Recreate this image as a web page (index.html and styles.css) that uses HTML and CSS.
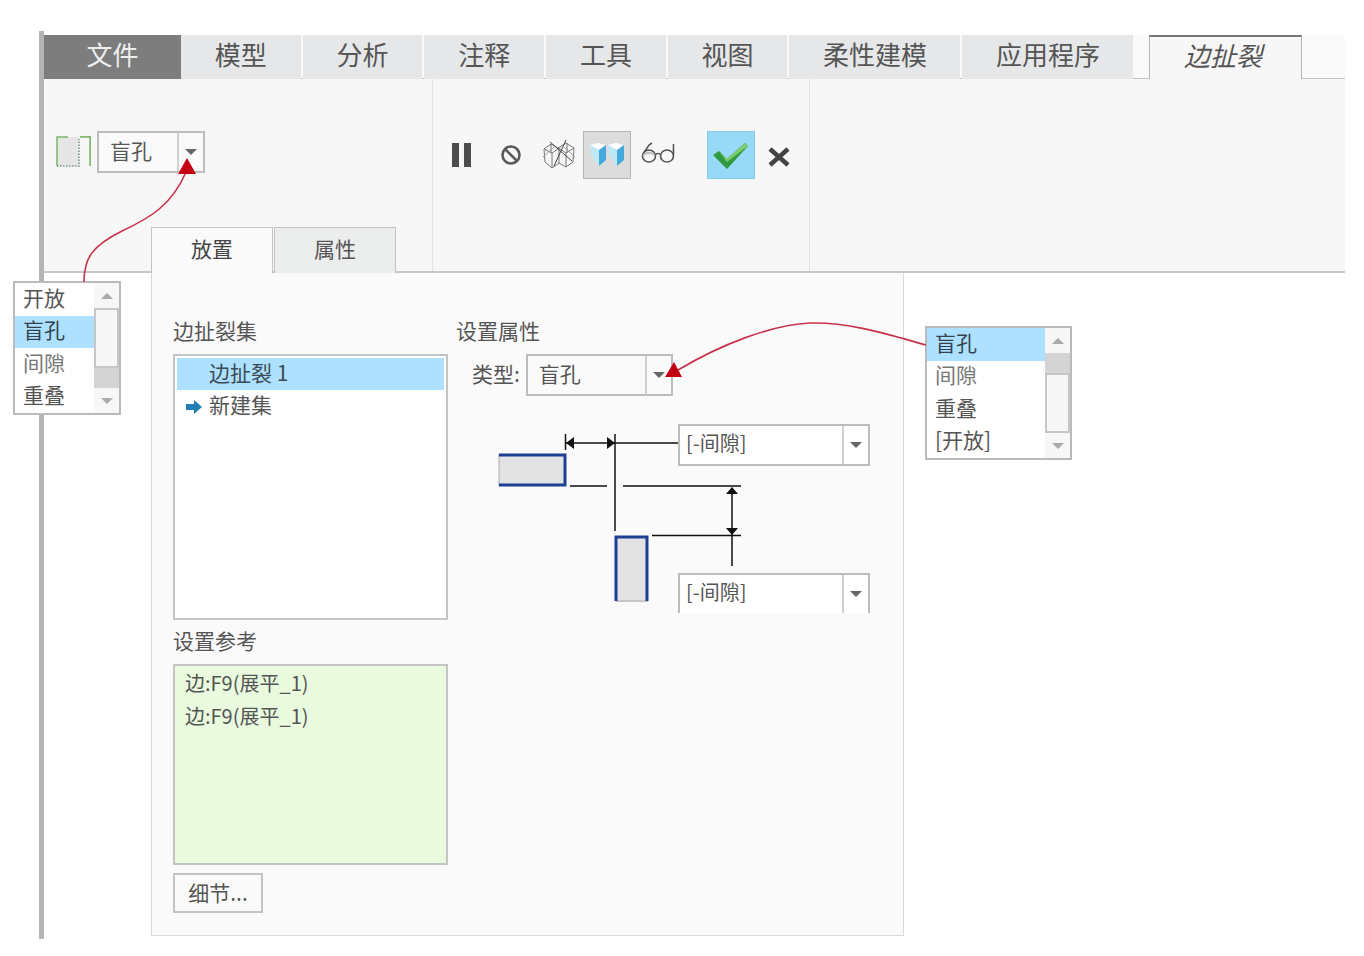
FILE: index.html
```html
<!DOCTYPE html>
<html lang="zh-CN">
<head>
  <meta charset="UTF-8">
  <title>边扯裂</title>
  <link rel="stylesheet" href="styles.css">
</head>
<body>
  <div class="window">
    <nav class="tab-bar">
      <div class="tab tab-file">文件</div>
      <div class="tab tab-sm">模型</div>
      <div class="tab tab-sm">分析</div>
      <div class="tab tab-sm">注释</div>
      <div class="tab tab-sm">工具</div>
      <div class="tab tab-sm">视图</div>
      <div class="tab tab-lg">柔性建模</div>
      <div class="tab tab-lg">应用程序</div>
      <div class="tab tab-active">边扯裂</div>
      <div class="tab-rest"></div>
    </nav>

    <div class="ribbon">
      <div class="group group-type">
        <div class="type-row">
          <svg class="type-icon" width="36" height="34" viewBox="0 0 36 34">
            <rect x="1" y="2" width="22" height="29" fill="#e6e6e6" />
            <path d="M1 31V2H12M24 2H34V31" fill="none" stroke="#7fb56a" stroke-width="1.5" />
            <path d="M1 31H23V4" fill="none" stroke="#6f8f8f" stroke-width="1.5" stroke-dasharray="1.5 1.5" />
            <rect x="24" y="2" width="10" height="29" fill="#f7f7f7" />
            <path d="M24 2H34V31" fill="none" stroke="#7fb56a" stroke-width="1.5" />
          </svg>
          <div class="combo combo-ribbon">
            <div class="combo-value">盲孔</div>
            <div class="combo-btn"><span class="caret"></span></div>
          </div>
        </div>
        <div class="panel-tabs">
          <div class="panel-tab panel-tab-active">放置</div>
          <div class="panel-tab">属性</div>
        </div>
      </div>

      <div class="group group-tools">
        <svg class="tool-pause" width="22" height="26" viewBox="0 0 22 26">
          <rect x="1" y="1" width="7" height="24" fill="#4d4d4d" />
          <rect x="13" y="1" width="7" height="24" fill="#4d4d4d" />
        </svg>
        <svg class="tool-stop" width="22" height="22" viewBox="0 0 22 22">
          <circle cx="11" cy="11" r="8.500" fill="none" stroke="#5a5a5a" stroke-width="2.600" />
          <path d="M5 5L17 17" stroke="#5a5a5a" stroke-width="2.600" />
        </svg>
        <svg class="tool-wire" width="34" height="30" viewBox="0 0 34 30" fill="none" stroke="#777" stroke-width="1">
          <path d="M2 10L9 5L16 9L24 4L32 9L31 23L24 28L17 24L10 29L3 23Z" />
          <path d="M2 10L10 14L17 9L24 14L32 9M10 14V29M24 14V28M17 9V24M9 5V14M25 4V14" />
          <path d="M24 1L12 27M8 3L30 22" stroke="#444" />
          <path d="M1 18L12 8M22 8L33 18" stroke="#999" />
        </svg>
        <div class="tool-btn">
          <svg width="34" height="28" viewBox="0 0 34 28">
            <path d="M0 4L8 2L16 4L9 9Z" fill="#fff" />
            <path d="M0 4L9 9V25L1 14Z" fill="#bfe8f6" />
            <path d="M9 9L16 4V19L9 25Z" fill="#45aadb" />
            <path d="M18 4L26 2L34 4L27 9Z" fill="#fff" />
            <path d="M18 4L27 9V25L19 14Z" fill="#bfe8f6" />
            <path d="M27 9L34 4V19L27 25Z" fill="#45aadb" />
          </svg>
        </div>
        <svg class="tool-glasses" width="34" height="26" viewBox="0 0 34 26" fill="none" stroke="#555" stroke-width="1.600">
          <ellipse cx="8" cy="16" rx="6.500" ry="6" />
          <ellipse cx="26" cy="16" rx="6.500" ry="6" />
          <path d="M14 15C16 13 18 13 20 15M2 14L8 5L11 3M32.500 15V4" />
          <path d="M2.500 15C5 12 11 12 13.500 15" stroke="#bbb" stroke-width="2" />
        </svg>
        <div class="ok-btn">
          <svg width="38" height="30" viewBox="0 0 38 30">
            <path d="M1 15L7 11L15 19L33 3L36 6L15 29Z" fill="#2f9a3f" />
            <path d="M7 11L15 19L33 3L36 6L15 22Z" fill="#7ccb6c" />
          </svg>
        </div>
        <svg class="tool-close" width="22" height="20" viewBox="0 0 22 20">
          <path d="M2 2L20 18M20 2L2 18" stroke="#444" stroke-width="4.500" />
        </svg>
      </div>

      <div class="group group-empty"></div>
    </div>

    <section class="panel">
      <div class="col-left">
        <div class="field-label">边扯裂集</div>
        <div class="list list-sets">
          <div class="list-row list-row-sel">边扯裂 1</div>
          <div class="list-row">
            <svg class="new-arrow" width="18" height="16" viewBox="0 0 18 16">
              <path d="M1 5H9V1L17 8L9 15V11H1Z" fill="#1f7fb4" />
            </svg>
            新建集
          </div>
        </div>
        <div class="field-label label-refs">设置参考</div>
        <div class="list list-refs">
          <div class="ref-row">边:F9(展平_1)</div>
          <div class="ref-row">边:F9(展平_1)</div>
        </div>
        <button class="details-btn">细节...</button>
      </div>

      <div class="col-right">
        <div class="field-label">设置属性</div>
        <div class="prop-row">
          <span class="prop-label">类型:</span>
          <div class="combo combo-prop">
            <div class="combo-value">盲孔</div>
            <div class="combo-btn"><span class="caret"></span></div>
          </div>
        </div>
        <div class="diagram">
          <svg class="diagram-lines" width="385" height="193" viewBox="490 420 385 193">
            <rect x="499" y="454" width="66" height="32" fill="#e3e3e3" />
            <path d="M499 454V486" stroke="#aaa" />
            <path d="M499 455H565V485H499" fill="none" stroke="#1c3f94" stroke-width="3" />
            <rect x="616" y="536" width="32" height="66" fill="#e3e3e3" />
            <path d="M616 601H648" stroke="#aaa" />
            <path d="M616 601V537H647V601" fill="none" stroke="#1c3f94" stroke-width="3" />
            <g stroke="#111" stroke-width="1.500" fill="none">
              <path d="M565.500 434V450M565 443H678M615 434V531" />
              <path d="M570 486H607M623 486H741M652 535.500H741M732 488V566" />
            </g>
            <g fill="#111">
              <path d="M566 443L574 437V449Z" />
              <path d="M615 443L607 437V449Z" />
              <path d="M732 487L726 494H738Z" />
              <path d="M732 535L726 528H738Z" />
            </g>
          </svg>
          <div class="combo combo-gap combo-gap-top">
            <div class="combo-value">[-间隙]</div>
            <div class="combo-btn"><span class="caret"></span></div>
          </div>
          <div class="combo combo-gap combo-gap-bottom">
            <div class="combo-value">[-间隙]</div>
            <div class="combo-btn"><span class="caret"></span></div>
          </div>
        </div>
      </div>
    </section>
  </div>

  <!-- callout dropdowns beside the screenshot -->
  <div class="callout callout-left">
    <div class="callout-items">
      <div class="callout-item">开放</div>
      <div class="callout-item callout-item-sel">盲孔</div>
      <div class="callout-item item-dim">间隙</div>
      <div class="callout-item">重叠</div>
    </div>
    <div class="scroll">
      <div class="scroll-btn"><span class="caret caret-up"></span></div>
      <div class="scroll-thumb"></div>
      <div class="scroll-track"></div>
      <div class="scroll-btn"><span class="caret caret-dim"></span></div>
    </div>
  </div>

  <div class="callout callout-right">
    <div class="callout-items">
      <div class="callout-item callout-item-sel">盲孔</div>
      <div class="callout-item item-dim">间隙</div>
      <div class="callout-item">重叠</div>
      <div class="callout-item">[开放]</div>
    </div>
    <div class="scroll">
      <div class="scroll-btn"><span class="caret caret-up"></span></div>
      <div class="scroll-track"></div>
      <div class="scroll-thumb"></div>
      <div class="scroll-btn"><span class="caret caret-dim"></span></div>
    </div>
  </div>

  <svg class="arrows" width="1364" height="956" viewBox="0 0 1364 956">
    <g fill="none" stroke="#c8324a" stroke-width="1.600">
      <path d="M84 282C84 258 92 246 122 231C150 218 172 205 186 172" />
      <path d="M926 345C890 335 850 322 810 323C770 325 720 345 678 370" />
    </g>
    <path d="M187 158L178 174H196Z" fill="#c40015" />
    <path d="M674 362L665 377H682Z" fill="#c40015" />
  </svg>
</body>
</html>
```

FILE: styles.css
```css
:root {
  --text-color: #555;
  --line-color: #bdbdbd;
  --select-color: #aee0ff;
  --tab-color: #e6e7e8;
  --ribbon-color: #f7f7f7;
}

* {
  box-sizing: border-box;
}

body {
  margin: 0;
  background-color: white;
  color: var(--text-color);
  font-family: "Noto Sans CJK SC", "Noto Sans", sans-serif;
  font-size: 21px;
  position: relative;
  height: 956px;
  overflow: hidden;
}

.window {
  width: 1306px;
  height: 908px;
  margin: 31px 0 0 39px;
  border-left: 5px solid #b4b4b4;
}

/* Top tabs */
.tab-bar {
  display: flex;
  gap: 2px;
  height: 48px;
  padding-top: 4px;
  background: linear-gradient(#fff 0, #fff 4px, #fafafa 4px);
  border-bottom: 1px solid #c4c4c4;
}

.tab {
  display: flex;
  align-items: center;
  justify-content: center;
  height: 44px;
  padding-bottom: 6px;
  background-color: var(--tab-color);
  font-size: 26px;
  line-height: 1;
}

.tab-file {
  width: 137px;
  margin-right: -2px;
  background-color: #7d7d7d;
  color: #eee;
}

.tab-sm {
  width: 119.700px;
}

.tab-lg {
  width: 171px;
}

.tab-active {
  width: 153px;
  margin-left: 14px;
  padding-right: 6px;
  background-color: var(--ribbon-color);
  border: 1px solid #b5b5b5;
  border-top: 2px solid #777;
  border-bottom: none;
  font-style: italic;
  position: relative;
  z-index: 1;
}

.tab-rest {
  flex: 1;
}

/* Ribbon */
.ribbon {
  display: flex;
  height: 194px;
  background-color: var(--ribbon-color);
  border-bottom: 2px solid #c8c8c8;
}

.group {
  border-right: 1px solid #e2e2e2;
}

.group-type {
  display: flex;
  flex-direction: column;
  justify-content: space-between;
  width: 389px;
  padding: 52px 0 0 12px;
}

.type-row {
  display: flex;
  align-items: center;
  gap: 5px;
}

.panel-tabs {
  display: flex;
  gap: 1px;
  height: 46px;
  margin: 0 0 -2px 95px;
}

.panel-tab {
  display: flex;
  align-items: center;
  justify-content: center;
  width: 122px;
  padding-bottom: 5px;
  background-color: #eceded;
  border: 1px solid #c4c4c4;
  border-bottom: none;
}

.panel-tab-active {
  background-color: #fafafa;
  color: #444;
}

.group-tools {
  display: flex;
  align-items: flex-start;
  width: 377px;
  padding: 52px 0 0 18px;
}

.tool-pause {
  margin: 11px 0 0 0;
}

.tool-stop {
  margin: 13px 0 0 27px;
}

.tool-wire {
  margin: 8px 0 0 20px;
}

.tool-btn {
  display: flex;
  align-items: center;
  justify-content: center;
  width: 48px;
  height: 48px;
  margin-left: 7px;
  background-color: #dcdcdc;
  border: 1px solid #b5b5b5;
}

.tool-glasses {
  margin: 9px 0 0 10px;
}

.ok-btn {
  display: flex;
  align-items: center;
  justify-content: center;
  width: 48px;
  height: 48px;
  margin-left: 32px;
  background-color: #99d9f8;
  border: 1px solid #84cdea;
}

.tool-close {
  margin: 16px 0 0 13px;
}

.group-empty {
  flex: 1;
  border-right: none;
}

/* Combo boxes */
.combo {
  display: flex;
  background-color: #fafafa;
  border: 2px solid var(--line-color);
  line-height: 1;
}

.combo-value {
  flex: 1;
  display: flex;
  align-items: center;
  padding: 0 0 4px 11px;
}

.combo-btn {
  display: flex;
  align-items: center;
  justify-content: center;
  width: 26px;
  border-left: 2px solid #cfcfcf;
}

.caret {
  width: 0;
  height: 0;
  border-left: 6px solid transparent;
  border-right: 6px solid transparent;
  border-top: 6px solid #666;
}

.caret-up {
  border-top: none;
  border-bottom: 6px solid #aaa;
}

.caret-dim {
  border-top-color: #aaa;
}

.combo-ribbon {
  width: 108px;
  height: 42px;
}

.combo-prop {
  width: 147px;
  height: 42px;
}

.combo-gap {
  position: absolute;
  left: 188px;
  width: 192px;
  background-color: white;
}

.combo-gap .combo-value {
  padding-left: 6px;
  font-size: 20px;
}

.combo-gap-top {
  top: 4px;
  height: 42px;
}

.combo-gap-bottom {
  top: 153px;
  height: 40px;
  border-bottom: none;
}

/* Placement panel */
.panel {
  display: flex;
  gap: 8px;
  width: 753px;
  height: 663px;
  margin-left: 107px;
  padding: 46px 0 0 21px;
  background-color: #fafafa;
  border: 1px solid #d8d8d8;
  border-top: none;
}

.col-left {
  width: 275px;
}

.field-label {
  height: 26px;
  margin-bottom: 9px;
  line-height: 22px;
}

.list {
  border: 2px solid #c4c4c4;
  padding: 2px;
}

.list-sets {
  height: 266px;
  background-color: white;
}

.list-row {
  display: flex;
  align-items: center;
  height: 32px;
  padding: 0 0 4px 32px;
  position: relative;
}

.list-row-sel {
  background-color: var(--select-color);
  color: #3c4a55;
}

.new-arrow {
  position: absolute;
  left: 8px;
  top: 9px;
}

.label-refs {
  margin: 9px 0 9px;
}

.list-refs {
  height: 201px;
  padding: 2px 10px;
  background-color: #e9fadf;
  font-size: 20px;
}

.ref-row {
  height: 33px;
  line-height: 29px;
}

.details-btn {
  display: block;
  width: 90px;
  height: 40px;
  margin-top: 8px;
  padding: 0 0 3px;
  background-color: #fafafa;
  border: 2px solid #c4c4c4;
  color: var(--text-color);
  font: inherit;
}

.prop-row {
  display: flex;
  align-items: center;
  gap: 6px;
  padding-left: 16px;
}

.prop-label {
  padding-bottom: 4px;
}

.diagram {
  position: relative;
  width: 385px;
  height: 193px;
  margin: 24px 0 0 34px;
}

.diagram-lines {
  display: block;
}

/* Callouts */
.callout {
  position: absolute;
  display: flex;
  background-color: white;
  border: 2px solid #bababa;
}

.callout-left {
  left: 13px;
  top: 281px;
  width: 108px;
  height: 134px;
}

.callout-right {
  left: 925px;
  top: 326px;
  width: 147px;
  height: 134px;
}

.callout-items {
  flex: 1;
}

.callout-item {
  display: flex;
  align-items: center;
  height: 32.500px;
  padding: 0 0 5px 8px;
}

.callout-item-sel {
  background-color: var(--select-color);
  color: #34424e;
}

.item-dim {
  color: #777;
}

.scroll {
  display: flex;
  flex-direction: column;
  width: 25px;
  background-color: #f2f2f2;
}

.scroll-btn {
  display: flex;
  align-items: center;
  justify-content: center;
  flex: none;
  height: 25px;
  background-color: #f7f7f7;
}

.scroll-thumb {
  flex: 1;
  background-color: #f6f6f6;
  border: 2px solid #c6c6c6;
}

.scroll-track {
  flex: none;
  height: 20px;
  background-color: #d4d4d4;
}

.arrows {
  position: absolute;
  left: 0;
  top: 0;
  pointer-events: none;
}
```
